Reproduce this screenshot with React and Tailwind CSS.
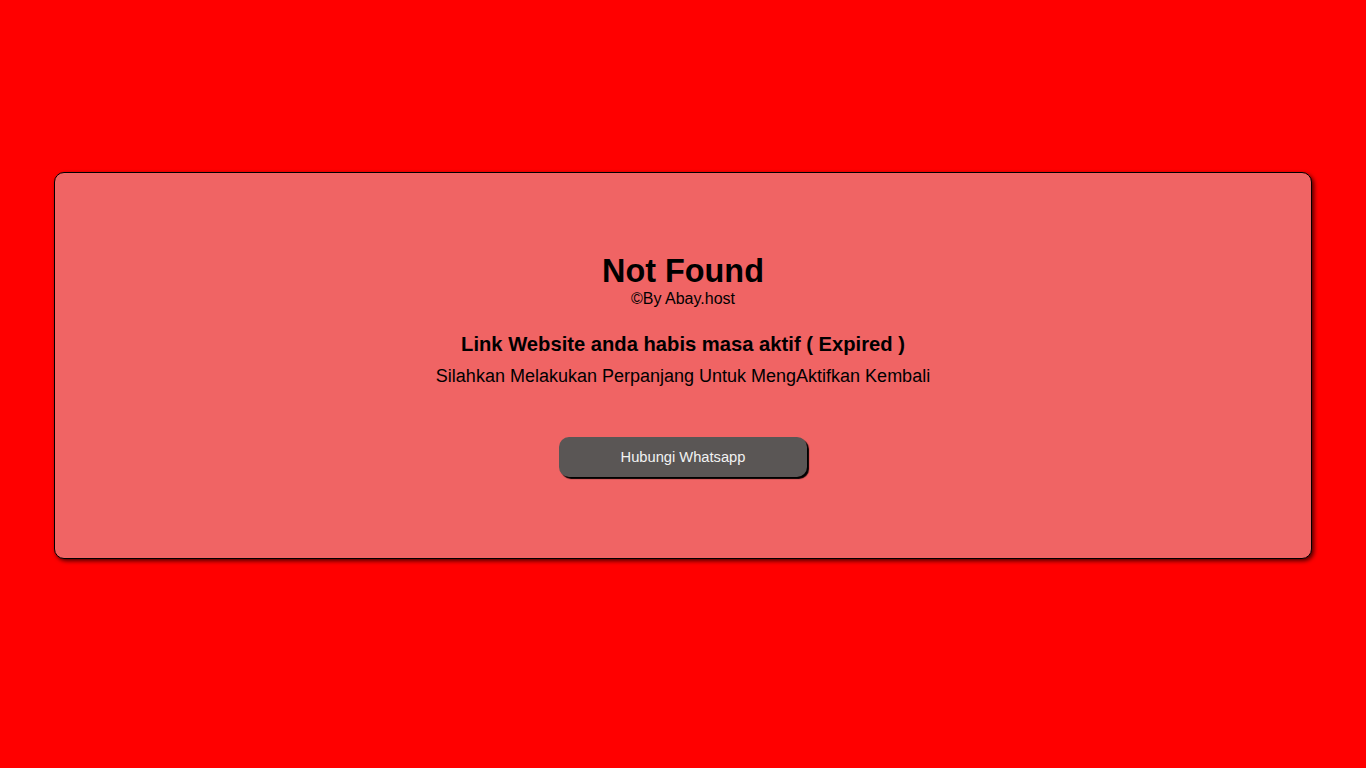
export default function App() {
  return (
    <div
      className="min-h-screen w-full bg-[#ff0000] px-[54px] pt-[172px]"
      style={{ fontFamily: '"Liberation Sans", Arial, sans-serif' }}
    >
      <div className="flex flex-col items-center rounded-[10px] border border-black bg-[#f06464] pt-[80px] pb-[81px] text-center text-black shadow-[2px_2px_4px_rgba(0,0,0,0.7)]">
        <h1 className="m-0 text-[32.4px] font-bold leading-[1.15]">Not Found</h1>
        <p className="m-0 text-[16px] leading-[1.15]">©By Abay.host</p>
        <h3 className="m-0 mt-[24px] text-[20.2px] font-bold leading-[1.15]">
          Link Website anda habis masa aktif ( Expired )
        </h3>
        <p className="m-0 mt-[10px] text-[18px] leading-[1.15]">
          Silahkan Melakukan Perpanjang Untuk MengAktifkan Kembali
        </p>
        <button className="mt-[50px] flex h-[40px] w-[248px] items-center justify-center rounded-[10px] bg-[#5a5655] text-[14.7px] text-[#f2f2f2] shadow-[2px_2px_1px_#000]">
          Hubungi Whatsapp
        </button>
      </div>
    </div>
  );
}
